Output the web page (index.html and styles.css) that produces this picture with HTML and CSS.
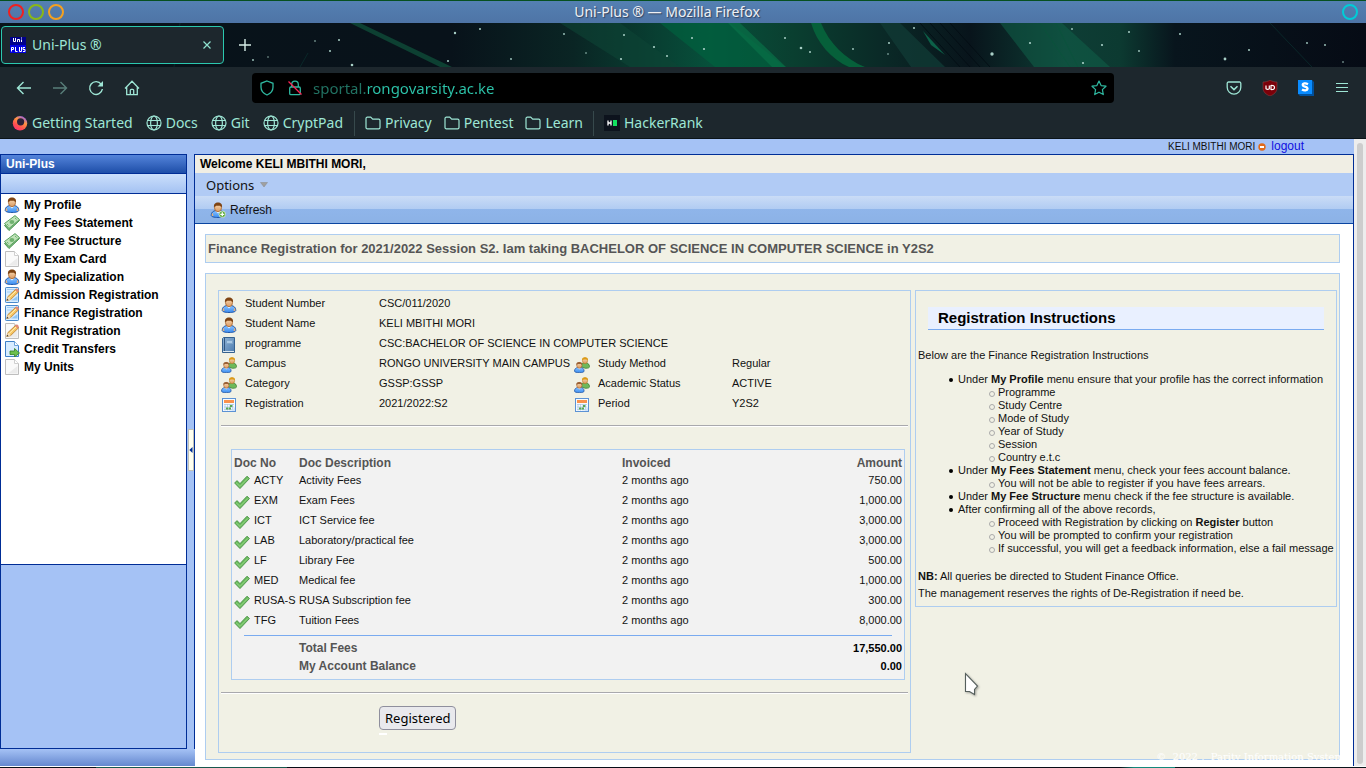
FILE: index.html
```html
<!DOCTYPE html>
<html lang="en">
<head>
<meta charset="utf-8">
<title>Uni-Plus ®</title>
<link rel="stylesheet" href="styles.css">
</head>
<body>
<svg class="sprite" aria-hidden="true">
  <defs>
    <linearGradient id="gBlue" x1="0" y1="0" x2="0" y2="1"><stop offset="0" stop-color="#8cc4ff"/><stop offset="1" stop-color="#3a8cf0"/></linearGradient>
    <linearGradient id="gHead" x1="0" y1="0" x2="0" y2="1"><stop offset="0" stop-color="#fbd9b0"/><stop offset="1" stop-color="#d99a63"/></linearGradient>
    <linearGradient id="gBook" x1="0" y1="0" x2="1" y2="1"><stop offset="0" stop-color="#8fb4d8"/><stop offset="1" stop-color="#4d7cae"/></linearGradient>
    <linearGradient id="gFire" x1="0.8" y1="0" x2="0.2" y2="1"><stop offset="0" stop-color="#9059ff"/><stop offset=".35" stop-color="#ff9640"/><stop offset=".7" stop-color="#ff5050"/><stop offset="1" stop-color="#ff2f7a"/></linearGradient>
    <linearGradient id="gWall" x1="0" y1="0" x2="1" y2="0">
      <stop offset="0" stop-color="#08131a"/><stop offset=".33" stop-color="#08121a"/><stop offset=".42" stop-color="#0a2524"/><stop offset=".52" stop-color="#07503b"/><stop offset=".58" stop-color="#0a3f30"/><stop offset=".65" stop-color="#0a2826"/><stop offset=".71" stop-color="#08141b"/><stop offset=".78" stop-color="#0e3d35"/><stop offset=".82" stop-color="#0c3a31"/><stop offset=".86" stop-color="#08151d"/><stop offset="1" stop-color="#060b15"/>
    </linearGradient>
  </defs>
  <symbol id="user" viewBox="0 0 16 16">
    <path d="M1.200 13.200C1.200 10.400 3.200 9 5.500 8.600h5c2.300.4 4.300 1.800 4.300 4.600 0 1.500-2.800 2.300-6.800 2.300s-6.800-.8-6.800-2.300z" fill="url(#gBlue)" stroke="#2459a8"/>
    <path d="M5.500 8.800h5L8 11.500z" fill="#e8f4ff"/>
    <path d="M1.600 13.200c0-.9.300-1.700.8-2.400l1.100 3.200c-1-.2-1.900-.4-1.900-.8zM14.400 13.200c0-.9-.3-1.700-.8-2.400L12.500 14c1-.2 1.900-.4 1.900-.8z" fill="#f2b375"/>
    <ellipse cx="8" cy="5.700" rx="3.500" ry="4" fill="url(#gHead)" stroke="#a7642e" stroke-width=".8"/>
    <path d="M4 5.500C3.500 2 5.300.6 8 .6S12.500 2 12 5.500C11 4 10 3.500 8 3.700 6 3.500 5 4 4 5.500z" fill="#7f4413"/>
  </symbol>
  <symbol id="group" viewBox="0 0 16 16">
    <path d="M6.500 9.500c0-2 1.500-3.200 3-3.400h3c1.700.2 3 1.500 3 3.500 0 1.300-1.500 1.700-4.200 1.700z" fill="#6fb85a" stroke="#3a8034" stroke-width=".8"/>
    <ellipse cx="11" cy="3.700" rx="2.600" ry="2.900" fill="url(#gHead)" stroke="#b97d24" stroke-width=".6"/>
    <path d="M8 3.600C7.800 1.200 9 .3 11 .3s3.300.9 3 3.300C13 2.400 12.400 2.400 11 2.500 9.500 2.400 9 2.600 8 3.600z" fill="#dd9b16"/>
    <path d="M.5 14c0-2 1.400-3.200 3-3.500h3.600c1.700.3 3 1.500 3 3.500 0 1.200-1.700 1.600-4.800 1.600S.5 15.200.5 14z" fill="url(#gBlue)" stroke="#2459a8" stroke-width=".8"/>
    <path d="M3.700 10.600h3.200l-1.600 1.800z" fill="#eef7ff"/>
    <ellipse cx="5.300" cy="8.300" rx="2.600" ry="2.900" fill="url(#gHead)" stroke="#a7642e" stroke-width=".6"/>
    <path d="M2.300 8.200C2 5.800 3.300 4.900 5.300 4.900s3.300.9 3 3.300C7.300 7 6.700 7 5.300 7.100 3.900 7 3.300 7.200 2.300 8.200z" fill="#9a6034"/>
  </symbol>
  <symbol id="money" viewBox="0 0 16 16">
    <path d="M.5 10.500L11 1l4.500 4.500L5 15.500z" fill="#7cbc7c" stroke="#4d9552"/>
    <path d="M.5 8.500L11 .6l4.500 3.900L5 13.500z" fill="#bfe2b8" stroke="#5ca261"/>
    <ellipse cx="7.900" cy="7" rx="2.400" ry="2.100" fill="#6fb16e"/>
    <path d="M3 9l1.500 1.500M11 3l1.600 1.500" stroke="#6fb16e"/>
  </symbol>
  <symbol id="page" viewBox="0 0 16 16">
    <path d="M1.500.5h9l4 4v11h-13z" fill="#fafafa" stroke="#bebebe"/><path d="M10.500.5v4h4" fill="#fff" stroke="#cfcfcf"/><path d="M4 14.500h9.500V7z" fill="#ebebeb"/>
  </symbol>
  <symbol id="pencil" viewBox="0 0 16 16">
    <path d="M4 9.500L12 2l2.700 2.700-8 7.800-4 1.100z" fill="#f7c765" stroke="#b57724" stroke-width=".8"/><path d="M5.200 10.500L12.800 3.300" stroke="#fff0b8"/><path d="M4 9.500l2.700 3-4 1.100z" fill="#f5dfbd"/><path d="M3.300 11.800l1.200 1.300-1.800.5z" fill="#333"/><path d="M11 3l1-1.200c1.500-.8 3.200.9 2.700 2.700l-1 1z" fill="#e28b78"/>
  </symbol>
  <symbol id="sheetedit" viewBox="0 0 16 16">
    <rect x="1.500" y=".5" width="13" height="15" rx=".7" fill="#d9edff" stroke="#4a89cb"/><path d="M3 2.500h8M3 5h5" stroke="#a2cdf4"/><path d="M7 13.500h6.500V9" fill="#93c8f5"/><use href="#pencil"/>
  </symbol>
  <symbol id="pageedit" viewBox="0 0 16 16"><use href="#page"/><use href="#pencil"/></symbol>
  <symbol id="pagego" viewBox="0 0 16 16">
    <path d="M1.500.5h9l4 4v11h-13z" fill="#d8ecff" stroke="#3f80c8"/><path d="M10.500.5v4h4" fill="#fff" stroke="#6aa2dc"/>
    <path d="M6 10h4.500V7.500L15.500 12l-5 4v-2.500H6z" fill="#6cc04e" stroke="#347f29" stroke-width=".8"/>
  </symbol>
  <symbol id="book" viewBox="0 0 16 16">
    <path d="M1.500 1.500l1-1h11v15h-12z" fill="url(#gBook)" stroke="#35618f"/><path d="M3.500 1v14" stroke="#31567e"/><rect x="5.500" y="3.500" width="6" height="3" fill="#a9c9e5" stroke="#7fa6ca"/><path d="M2 14.500h11" stroke="#dbe8f3"/>
  </symbol>
  <symbol id="cal" viewBox="0 0 16 16">
    <rect x="1.500" y="1.500" width="13" height="13" fill="#f5faff" stroke="#5c92d4"/><path d="M3 3h10v3H3z" fill="#f9914c"/><path d="M3 7.500h10M3 10h10M3 12.500h10M4 7v6.500M6.500 7v6.500M9 7v6.500M11.500 7v6.500" stroke="#a9c3df" stroke-width=".7"/><path d="M9 8h2.300v2H9zM5 10.500h2.500v2H5zM8 10.500h2v2H8z" fill="#59a852"/><path d="M10 14l4-4v4z" fill="#cfe3fa"/>
  </symbol>
  <symbol id="tick" viewBox="0 0 16 16">
    <path d="M.6 9l2.400-2.400 3 3L13 2.200l2.500 2.300L6 14.600z" fill="#6dbb60" stroke="#3e8a3c" stroke-width=".8"/><path d="M2.200 8.800l3.800 3.600L14 4.300" fill="none" stroke="#9bdc8d" stroke-width=".8"/>
  </symbol>
  <symbol id="useradd" viewBox="0 0 16 16"><use href="#user"/><circle cx="12.300" cy="12.300" r="3.300" fill="#5bab3a" stroke="#fff" stroke-width=".6"/><path d="M12.300 10.300v4M10.300 12.300h4" stroke="#fff" stroke-width="1.300"/></symbol>
  <symbol id="globe" viewBox="0 0 16 16"><g fill="none" stroke="currentColor" stroke-width="1.200"><circle cx="8" cy="8" r="7"/><ellipse cx="8" cy="8" rx="3.400" ry="7"/><path d="M1.500 5.500h13M1.500 10.500h13"/></g></symbol>
  <symbol id="folder" viewBox="0 0 16 16"><path d="M1 3.500a1.300 1.300 0 0 1 1.300-1.300h3.400l2 2h6a1.300 1.300 0 0 1 1.300 1.300v7a1.300 1.300 0 0 1-1.300 1.300H2.300A1.300 1.300 0 0 1 1 12.500z" fill="none" stroke="currentColor" stroke-width="1.200"/></symbol>
</svg>

<header class="browser">
  <div class="titlebar">
    <button class="ring red" aria-label="Close window"></button>
    <button class="ring green" aria-label="Minimize window"></button>
    <button class="ring orange" aria-label="Maximize window"></button>
    <span class="window-title">Uni-Plus ® — Mozilla Firefox</span>
    <button class="ring cyan" aria-label="Pin window"></button>
  </div>
  <div class="tabstrip">
    <svg class="wallpaper" viewBox="0 0 1366 44" preserveAspectRatio="none" aria-hidden="true">
      <rect width="1366" height="44" fill="url(#gWall)"/>
      <path d="M350 0h10l92 44h-12z" fill="#0d4032"/>
      <path d="M560 0h60l60 44h-50z" fill="#0d4436" opacity=".6"/><path d="M660 0h70l55 44h-70z" fill="#00633f" opacity=".65"/><path d="M728 0h12l46 44h-14z" fill="#087047" opacity=".7"/>
      <path d="M811 0h10c8 20 24 36 44 44h-16c-18-8-32-24-38-44z" fill="#06603a"/>
      <path d="M880 0h20l45 44h-34z" fill="#103a35" opacity=".8"/><path d="M923 8l22 24-14-10z" fill="#0c6048"/>
      <path d="M1000 0h62l48 44h-76z" fill="#116048" opacity=".55"/><path d="M1040 0l30 44M1056 0l22 44" stroke="#08553a" opacity=".6"/>
      <path d="M920 0l40 44M930 0l40 44M940 0l40 44M950 0l40 44" stroke="#030c13" opacity=".8"/><path d="M1270 0l42 44M308 30l-8 14M180 0l-6 44" stroke="#0b3130" opacity=".7"/>
      <g fill="#a8cfc6">
        <circle cx="253" cy="37" r=".9"/><circle cx="268" cy="34" r=".7"/><circle cx="315" cy="18" r=".8"/><circle cx="330" cy="28" r="1"/><circle cx="339" cy="17" r="1"/><circle cx="352" cy="42" r="1.300"/><circle cx="448" cy="38" r="1"/><circle cx="455" cy="10" r="1.200"/><circle cx="480" cy="6" r="1"/><circle cx="511" cy="36" r=".9"/><circle cx="564" cy="11" r=".9"/><circle cx="586" cy="30" r=".8"/><circle cx="624" cy="12" r="1"/><circle cx="621" cy="36" r="1.100"/><circle cx="654" cy="24" r="1.100"/><circle cx="667" cy="33" r="1"/><circle cx="692" cy="15" r="1"/><circle cx="704" cy="26" r="1.100"/><circle cx="785" cy="15" r="1"/><circle cx="801" cy="25" r="1.300"/><circle cx="810" cy="29" r="1"/><circle cx="853" cy="26" r=".9"/><circle cx="889" cy="20" r="1"/><circle cx="888" cy="31" r=".8"/><circle cx="914" cy="5" r="1"/><circle cx="992" cy="31" r="1.700"/><circle cx="1030" cy="20" r="1.100"/><circle cx="1072" cy="6" r=".9"/><circle cx="1083" cy="40" r="1.100"/><circle cx="1102" cy="22" r="1.100"/><circle cx="1129" cy="9" r="1"/><circle cx="1139" cy="28" r=".9"/><circle cx="1180" cy="11" r="1"/><circle cx="1225" cy="36" r="1.400"/><circle cx="1249" cy="27" r="1"/><circle cx="1307" cy="20" r=".9"/><circle cx="1325" cy="22" r=".9"/><circle cx="1343" cy="39" r=".8"/>
      </g>
    </svg>
    <div class="tab">
      <svg class="favicon" viewBox="0 0 16 16" aria-hidden="true"><rect width="16" height="16" fill="#0000e0"/><rect width="16" height="8" fill="#00008b"/><path d="M3.500 1v3.500h2V1M7.500 5V2.500h2V5M11.500 2.500V5M11.500.5v1M1.500 14.500v-4h2v2h-2M5.500 10v4.500h2M9.500 10v4.500h2V10M15 10.500h-2v2h2v2h-2" fill="none" stroke="#fff"/></svg>
      <span class="tab-title">Uni-Plus ®</span>
      <button class="plain close" aria-label="Close tab"><svg viewBox="0 0 10 10"><path d="M1.500 1.500l7 7M8.500 1.500l-7 7" stroke="#8fe3cf" stroke-width="1.200"/></svg></button>
    </div>
    <button class="plain newtab" aria-label="New tab"><svg viewBox="0 0 14 14"><path d="M7 1v12M1 7h12" stroke="#d7eee8" stroke-width="1.400"/></svg></button>
  </div>
  <nav class="navbar" aria-label="Browser">
    <button class="plain tool" aria-label="Back"><svg viewBox="0 0 16 16"><path d="M15 8H1.500M7.500 2l-6 6 6 6" fill="none" stroke="currentColor" stroke-width="1.400"/></svg></button>
    <button class="plain tool faded" aria-label="Forward"><svg viewBox="0 0 16 16"><path d="M1 8h13.500M8.500 2l6 6-6 6" fill="none" stroke="currentColor" stroke-width="1.400"/></svg></button>
    <button class="plain tool" aria-label="Reload"><svg viewBox="0 0 16 16"><path d="M13.300 4.300A6.400 6.400 0 1 0 14.400 9" fill="none" stroke="currentColor" stroke-width="1.400"/><path d="M15 1v5.500H9.500z" fill="currentColor"/></svg></button>
    <button class="plain tool" aria-label="Home"><svg viewBox="0 0 16 16"><path d="M1 8.500L8 1.300l7 7.200M2.700 7v7.700h10.600V7M6.300 14.500V10.300a1 1 0 0 1 1-1h1.400a1 1 0 0 1 1 1v4.200" fill="none" stroke="currentColor" stroke-width="1.300"/></svg></button>
    <div class="urlbar">
      <svg viewBox="0 0 16 16" aria-hidden="true"><path d="M8 1l6 2.300v4C14 11 11.500 13.500 8 15 4.500 13.500 2 11 2 7.300v-4z" fill="none" stroke="currentColor" stroke-width="1.300"/></svg>
      <svg viewBox="0 0 16 16" aria-hidden="true"><rect x="2.700" y="7" width="10.600" height="7.700" rx="1.300" fill="none" stroke="currentColor" stroke-width="1.300"/><path d="M4.700 7V4.500a3.300 3.300 0 0 1 6.600 0V7" fill="none" stroke="currentColor" stroke-width="1.300"/><path d="M1.500 1.500l13 13" stroke="#ff2255" stroke-width="1.300"/></svg>
      <input class="url" type="text" aria-label="Address" value="sportal.rongovarsity.ac.ke">
      <svg viewBox="0 0 16 16" aria-hidden="true"><path d="M8 1l2.100 4.600 4.900.6-3.600 3.400.9 5L8 12.200 3.700 14.600l.9-5L1 6.200l4.900-.6z" fill="none" stroke="currentColor" stroke-width="1.200" stroke-linejoin="round"/></svg>
    </div>
    <div class="extensions">
      <button class="plain tool" aria-label="Pocket"><svg viewBox="0 0 16 16"><path d="M2.500 2h11A1.300 1.300 0 0 1 14.800 3.300v4a6.800 6.800 0 0 1-13.600 0v-4A1.300 1.300 0 0 1 2.500 2z" fill="none" stroke="currentColor" stroke-width="1.300"/><path d="M4.500 6.300L8 9.600l3.500-3.300" fill="none" stroke="currentColor" stroke-width="1.500"/></svg></button>
      <button class="plain tool" aria-label="Ad blocker"><svg viewBox="0 0 16 16"><path d="M8 0c2 1.500 4.500 2 7 2v6c0 4-3 6.500-7 8-4-1.500-7-4-7-8V2c2.500 0 5-.5 7-2z" fill="#7b0009" stroke="#8c4a4a" stroke-width=".5"/><path d="M4 5.500v3.300q1.700 1.300 3.300 0V5.500M9 5.500v4q3.500.3 3.500-2t-3.500-2z" fill="none" stroke="#fff" stroke-width="1.200"/></svg></button>
      <button class="plain tool" aria-label="Stylus"><svg viewBox="0 0 16 16"><path d="M14 0l2 2v14H2l-2-2z" fill="#00509c"/><path d="M0 0h14v14H0z" fill="#0a8cff"/><path d="M10 4.200C7.500 2.800 4.500 3.300 4.800 5.200 5 7 9.500 6.400 9.500 8.800 9.300 10.800 6 10.700 4 9.500" fill="none" stroke="#fff" stroke-width="2.300"/></svg></button>
      <button class="plain tool" aria-label="Menu"><svg viewBox="0 0 16 16"><path d="M2 3.500h12M2 7.500h12M2 11.500h12" stroke="currentColor"/></svg></button>
    </div>
  </nav>
  <nav class="bookmarks" aria-label="Bookmarks">
    <a href="#"><svg viewBox="0 0 16 16" aria-hidden="true"><circle cx="8" cy="8.300" r="7.200" fill="url(#gFire)"/><circle cx="8.600" cy="6.800" r="3.600" fill="#2b2138"/></svg>Getting Started</a>
    <a href="#"><svg aria-hidden="true"><use href="#globe"/></svg>Docs</a>
    <a href="#"><svg aria-hidden="true"><use href="#globe"/></svg>Git</a>
    <a href="#"><svg aria-hidden="true"><use href="#globe"/></svg>CryptPad</a>
    <span class="divider"></span>
    <a href="#"><svg aria-hidden="true"><use href="#folder"/></svg>Privacy</a>
    <a href="#"><svg aria-hidden="true"><use href="#folder"/></svg>Pentest</a>
    <a href="#"><svg aria-hidden="true"><use href="#folder"/></svg>Learn</a>
    <span class="divider"></span>
    <a href="#"><svg viewBox="0 0 16 16" aria-hidden="true"><rect width="16" height="16" fill="#0d131d"/><path d="M4 5.500v5M7 5.500v5M4 8h3" stroke="#fff" stroke-width="1.300"/><rect x="9" y="5" width="4" height="6" fill="#11e05f"/></svg>HackerRank</a>
  </nav>
</header>

<div class="viewport">
  <div class="site">
    <div class="userbar"><span>KELI MBITHI MORI</span><svg viewBox="0 0 8 8" aria-hidden="true"><circle cx="4" cy="4" r="3.700" fill="#e06a1c"/><rect x="2" y="3" width="4" height="2" fill="#fff"/></svg><a href="#">logout</a></div>
    <div class="columns">
      <div class="west">
        <div class="west-top">
          <aside class="sidebar">
            <h2>Uni-Plus</h2>
            <div class="side-tools"></div>
            <nav class="side-menu" aria-label="Uni-Plus">
              <a href="#"><svg><use href="#user"/></svg>My Profile</a>
              <a href="#"><svg><use href="#money"/></svg>My Fees Statement</a>
              <a href="#"><svg><use href="#money"/></svg>My Fee Structure</a>
              <a href="#"><svg><use href="#page"/></svg>My Exam Card</a>
              <a href="#"><svg><use href="#user"/></svg>My Specialization</a>
              <a href="#"><svg><use href="#sheetedit"/></svg>Admission Registration</a>
              <a href="#"><svg><use href="#sheetedit"/></svg>Finance Registration</a>
              <a href="#"><svg><use href="#pageedit"/></svg>Unit Registration</a>
              <a href="#"><svg><use href="#pagego"/></svg>Credit Transfers</a>
              <a href="#"><svg><use href="#page"/></svg>My Units</a>
            </nav>
            <div class="side-rest"></div>
          </aside>
          <div class="splitter"><button class="plain" aria-label="Collapse sidebar"><svg viewBox="0 0 4 6"><path d="M3.500 0v6L.3 3z" fill="#002d96"/></svg></button></div>
        </div>
        <div class="west-foot"></div>
      </div>
      <main class="main">
        <h1>Welcome KELI MBITHI MORI,</h1>
        <div class="menu"><button class="plain">Options<svg viewBox="0 0 8 6" aria-hidden="true"><path d="M.5.5h7L4 5z" fill="#a0a0a0" stroke="#888" stroke-width=".5"/></svg></button></div>
        <div class="toolbar"><button class="plain"><svg aria-hidden="true"><use href="#useradd"/></svg>Refresh</button></div>
        <div class="content">
          <h2 class="caption">Finance Registration for 2021/2022 Session S2. Iam taking BACHELOR OF SCIENCE IN COMPUTER SCIENCE in Y2S2</h2>
          <div class="panel">
            <section class="record">
              <table class="details">
                <colgroup><col class="c-icon"><col class="c-label"><col class="c-value"><col class="c-icon"><col class="c-label"><col></colgroup>
                <tr><td><svg><use href="#user"/></svg></td><th>Student Number</th><td colspan="4">CSC/011/2020</td></tr>
                <tr><td><svg><use href="#user"/></svg></td><th>Student Name</th><td colspan="4">KELI MBITHI MORI</td></tr>
                <tr><td><svg><use href="#book"/></svg></td><th>programme</th><td colspan="4">CSC:BACHELOR OF SCIENCE IN COMPUTER SCIENCE</td></tr>
                <tr><td><svg><use href="#group"/></svg></td><th>Campus</th><td>RONGO UNIVERSITY MAIN CAMPUS</td><td><svg><use href="#group"/></svg></td><th>Study Method</th><td>Regular</td></tr>
                <tr><td><svg><use href="#group"/></svg></td><th>Category</th><td>GSSP:GSSP</td><td><svg><use href="#group"/></svg></td><th>Academic Status</th><td>ACTIVE</td></tr>
                <tr><td><svg><use href="#cal"/></svg></td><th>Registration</th><td>2021/2022:S2</td><td><svg><use href="#cal"/></svg></td><th>Period</th><td>Y2S2</td></tr>
              </table>
              <hr>
              <div class="fees">
                <table>
                  <colgroup><col class="f-code"><col class="f-desc"><col class="f-when"><col></colgroup>
                  <thead><tr><th>Doc No</th><th>Doc Description</th><th>Invoiced</th><th>Amount</th></tr></thead>
                  <tbody>
                    <tr><td><svg><use href="#tick"/></svg>ACTY</td><td>Activity Fees</td><td>2 months ago</td><td>750.00</td></tr>
                    <tr><td><svg><use href="#tick"/></svg>EXM</td><td>Exam Fees</td><td>2 months ago</td><td>1,000.00</td></tr>
                    <tr><td><svg><use href="#tick"/></svg>ICT</td><td>ICT Service fee</td><td>2 months ago</td><td>3,000.00</td></tr>
                    <tr><td><svg><use href="#tick"/></svg>LAB</td><td>Laboratory/practical fee</td><td>2 months ago</td><td>3,000.00</td></tr>
                    <tr><td><svg><use href="#tick"/></svg>LF</td><td>Library Fee</td><td>2 months ago</td><td>500.00</td></tr>
                    <tr><td><svg><use href="#tick"/></svg>MED</td><td>Medical fee</td><td>2 months ago</td><td>1,000.00</td></tr>
                    <tr><td><svg><use href="#tick"/></svg>RUSA-S</td><td>RUSA Subscription fee</td><td>2 months ago</td><td>300.00</td></tr>
                    <tr><td><svg><use href="#tick"/></svg>TFG</td><td>Tuition Fees</td><td>2 months ago</td><td>8,000.00</td></tr>
                  </tbody>
                  <tfoot>
                    <tr class="rule"><td colspan="4"><div></div></td></tr>
                    <tr><td></td><th>Total Fees</th><td></td><td>17,550.00</td></tr>
                    <tr><td></td><th>My Account Balance</th><td></td><td>0.00</td></tr>
                  </tfoot>
                </table>
              </div>
              <hr>
              <div class="actions"><button class="registered">Registered</button><span class="dash"></span></div>
            </section>
            <section class="guide">
              <h3>Registration Instructions</h3>
              <p>Below are the Finance Registration Instructions</p>
              <ul>
                <li>Under <b>My Profile</b> menu ensure that your profile has the correct information
                  <ul><li>Programme</li><li>Study Centre</li><li>Mode of Study</li><li>Year of Study</li><li>Session</li><li>Country e.t.c</li></ul></li>
                <li>Under <b>My Fees Statement</b> menu, check your fees account balance.
                  <ul><li>You will not be able to register if you have fees arrears.</li></ul></li>
                <li>Under <b>My Fee Structure</b> menu check if the fee structure is available.</li>
                <li>After confirming all of the above records,
                  <ul><li>Proceed with Registration by clicking on <b>Register</b> button</li><li>You will be prompted to confirm your registration</li><li>If successful, you will get a feedback information, else a fail message</li></ul></li>
              </ul>
              <p class="note"><b>NB:</b> All queries be directed to Student Finance Office.<br>The management reserves the rights of De-Registration if need be.</p>
            </section>
          </div>
        </div>
      </main>
    </div>
    <div class="copyright">©&nbsp; 2022 ,&nbsp; Parity Information System</div>
  </div>
  <div class="scrollbar"><div class="thumb"></div></div>
  <svg class="pointer" viewBox="0 0 16 24" aria-hidden="true"><path d="M1.500 1.500v18h4l5 3v-5l3-3.500z" fill="#fff" stroke="#555f5c" stroke-width="1.100"/></svg>
</div>
<div class="desktop-edge"></div>
</body>
</html>
```
FILE: styles.css
```css
* { box-sizing: border-box; }
body {
  margin: 0;
  height: 100vh;
  display: flex;
  flex-direction: column;
  overflow: hidden;
  font: 11px/20px "Liberation Sans", Arial, sans-serif;
  color: #111;
}
.sprite { position: absolute; width: 0; height: 0; }
svg { width: 16px; height: 16px; display: block; flex: none; }
h1, h2, h3, p, ul { margin: 0; }
.plain { border: 0; padding: 0; background: none; color: inherit; font: inherit; }

/* Browser frame */
.browser {
  flex: none;
  background: #1d272d;
  border-top: 1px solid #06501f;
  border-bottom: 1px solid #0b1419;
  color: #9ee6d5;
  font: 14px/20px "Noto Sans", sans-serif;
}
.titlebar {
  height: 22px;
  display: flex;
  align-items: center;
  gap: 4px;
  padding: 0 8px;
  background: linear-gradient(#5480b2, #4e74a6);
}
.window-title {
  flex: 1;
  text-align: center;
  padding-right: 72px;
  color: #eef0f4;
  text-shadow: 1px 1px 1px #33425c;
}
.ring { width: 16px; height: 16px; padding: 0; border: 2px solid; border-radius: 50%; background: none; }
.red { color: #f02020; }
.green { color: #8ab816; }
.orange { color: #f5a11f; }
.cyan { color: #00ccd8; }
.tabstrip { position: relative; height: 44px; display: flex; align-items: center; padding: 0 1px; }
.wallpaper { position: absolute; inset: 0; width: 100%; height: 100%; }
.tab {
  position: relative;
  width: 223px;
  height: 38px;
  display: flex;
  align-items: center;
  gap: 6px;
  padding: 0 11px 0 8px;
  border: 1px solid #2bc8af;
  border-radius: 4px;
  background: #1d272d;
}
.tab-title { flex: 1; }
.close svg { width: 10px; height: 10px; }
.newtab { position: relative; margin-left: 14px; }
.newtab svg { width: 14px; height: 14px; }
.navbar { height: 41px; display: flex; align-items: center; padding: 0 16px; }
.tool { width: 16px; margin-right: 20px; }
.faded { opacity: .45; }
.urlbar {
  flex: 1;
  height: 30px;
  margin: 0 112px 0 92px;
  padding: 0 7px;
  display: flex;
  align-items: center;
  gap: 12px;
  border-radius: 4px;
  background: #000;
  color: #2fb8a0;
}
.url {
  flex: 1;
  min-width: 0;
  height: 24px;
  padding: 0;
  border: 0;
  font: inherit;
  font-size: 15px;
  outline: 0;
  margin-left: -2px;
  background: linear-gradient(90deg, #217363 55px, #2cc4aa 55px);
  background-clip: text;
  -webkit-background-clip: text;
  color: transparent;
}
.extensions { display: flex; gap: 20px; }
.extensions .tool { margin: 0; }
.bookmarks { height: 30px; display: flex; align-items: center; padding: 0 12px; }
.bookmarks a { display: flex; align-items: center; gap: 4px; margin-right: 13px; color: inherit; text-decoration: none; }
.bookmarks .divider ~ a { margin-right: 12px; }
.divider { width: 1px; height: 25px; margin: 0 10px 0 -2px; background: #37494c; }

/* Page area */
.viewport { position: relative; flex: 1; min-height: 0; display: flex; }
.site { position: relative; flex: 1; min-width: 0; display: flex; flex-direction: column; overflow: hidden; background: #a5c2f5; }
.userbar {
  flex: none;
  display: flex;
  justify-content: flex-end;
  align-items: center;
  height: 15px;
  padding-right: 50px;
  font-size: 10px;
}
.userbar svg { width: 8px; height: 8px; margin: 0 5px 0 3px; }
.userbar a { color: #1010e0; font-size: 12px; line-height: 15px; padding-bottom: 1px; text-decoration: none; }
.columns { flex: 1; min-height: 0; display: flex; }
.west { flex: 0 0 195px; display: flex; flex-direction: column; }
.west-top { flex: 1; min-height: 0; display: flex; }
.west-foot { height: 17px; background: linear-gradient(#a5c2f5, #6588cf); }
.sidebar { flex: 1; display: flex; flex-direction: column; border: 1px solid #002d96; }
.sidebar h2 {
  padding: 0 5px;
  font-size: 12px;
  line-height: 18px;
  color: #fff;
  background: linear-gradient(#5484da, #1e4ea8);
}
.side-tools { height: 21px; border: solid #002d96; border-width: 1px 0; background: linear-gradient(#cbdffc, #a4c2f2); }
.side-menu { flex: 369 1 0; padding: 2px 3px; background: #fff; border-bottom: 1px solid #002d96; }
.side-menu a {
  display: flex;
  align-items: center;
  gap: 4px;
  height: 18px;
  font-size: 12px;
  font-weight: bold;
  color: #000;
  text-decoration: none;
}
.side-rest { flex: 184 1 0; }
.splitter { width: 8px; display: flex; align-items: center; padding-bottom: 4px; border-right: 1px solid #002d96; }
.splitter button { width: 6px; height: 42px; margin: 0 auto; border: 1px solid #c2c2b8; background: #fffff0; }
.splitter svg { width: 4px; height: 6px; }

.main { flex: 1; min-width: 0; display: flex; flex-direction: column; border: solid #002d96; border-width: 1px 1px 0 0; background: #fff; }
.main h1 { padding-left: 5px; font-size: 12px; line-height: 18px; color: #000; background: #f0eee4; }
.menu { height: 23px; display: flex; align-items: center; padding: 0 11px; background: #b1cbf5; font: 13px/20px "Noto Sans", sans-serif; }
.menu button { display: flex; align-items: center; gap: 6px; }
.menu svg { width: 8px; height: 6px; }
.toolbar {
  height: 28px;
  display: flex;
  align-items: center;
  padding: 0 15px;
  border-bottom: 1px solid #0a45a0;
  background: linear-gradient(#cadcf6, #b0cbf2 50%, #8fb5ea 50%, #8cb2e6);
  font-size: 12px;
}
.toolbar button { display: flex; align-items: center; gap: 4px; }
.content { flex: 1; min-height: 0; display: flex; flex-direction: column; padding: 10px 13px 6px 10px; }
.caption {
  padding: 4px 2px 3px;
  margin-bottom: 10px;
  border: 1px solid #aecdf0;
  background: #f1f1e5;
  font-size: 13px;
  color: #555;
}
.panel {
  flex: 1;
  display: flex;
  align-items: flex-start;
  gap: 4px;
  padding: 16px 2px 6px 12px;
  border: 1px solid #aecdf0;
  background: #f1f1e5;
}
.record { flex: 1; align-self: stretch; padding: 2px; border: 1px solid #aecdf0; }
table { width: 100%; border-collapse: collapse; table-layout: fixed; }
td, th { padding: 0; text-align: left; white-space: nowrap; vertical-align: middle; }
.details th { font-weight: normal; }
.details tr { height: 20px; }
.details td svg { margin-top: 3px; }
.c-icon { width: 24px; }
.c-label { width: 134px; }
.c-value { width: 195px; }
hr { margin: 12px 0 0; border: 0; border-top: 1px solid #a9a9ad; border-bottom: 1px solid #fff; }
.fees { margin: 22px 3px 0 10px; padding: 5px 2px 4px; border: 1px solid #aecdf0; background: #f2f2f2; }
.fees th { font-size: 12px; line-height: 16px; color: #555; }
.fees td:last-child, .fees th:last-child { text-align: right; }
.fees tbody td { height: 20px; line-height: 18px; padding-bottom: 2px; }
.fees tbody td:first-child { display: flex; gap: 4px; }
.fees tbody svg { margin-top: 3px; }
.fees tfoot td { font-weight: bold; color: #000; line-height: 18px; }
.fees tfoot th { line-height: 18px; }
.rule div { height: 1px; margin: 4px 10px 3px; background: #7aabf0; }
.f-code { width: 65px; }
.f-desc { width: 323px; }
.f-when { width: 150px; }
.actions { padding: 12px 0 0 158px; }
.registered {
  display: block;
  height: 24px;
  padding: 0 5px;
  border: 1px solid #8f8f9d;
  border-radius: 4px;
  background: #e9e9ed;
  color: #000;
  font: 13px/20px "Noto Sans", sans-serif;
}
.dash { display: block; width: 8px; height: 2px; margin-top: 3px; background: #fff; }
.guide { flex: 0 0 422px; padding: 16px 2px 4px; border: 1px solid #aecdf0; line-height: 13px; }
.guide h3 {
  margin: 0 10px 19px;
  padding-left: 10px;
  border-bottom: 1px solid #7aabf0;
  background: #e9f0ff;
  color: #000;
  font-size: 15px;
  line-height: 22px;
}
.guide ul { list-style: none; padding-left: 40px; }
.guide > ul { margin: 11px 0 13px; }
.guide ul ul { white-space: nowrap; }
.guide li { position: relative; }
.guide li::before {
  content: "";
  position: absolute;
  left: -9px;
  top: 5px;
  width: 4px;
  height: 4px;
  border-radius: 50%;
  background: #000;
}
.guide li li::before { background: none; border: 1px solid #aaa; }
.guide .note { line-height: 17px; }
.copyright {
  position: absolute;
  right: 10px;
  bottom: 1px;
  white-space: nowrap;
  color: #fff;
  font: 10px/17px "DejaVu Serif", serif;
}
.scrollbar { width: 12px; padding: 4px 4px 2px 3px; background: #ededed; }
.thumb { width: 6px; height: 100%; border-radius: 3px; background: #cdcdcd; }
.pointer { position: absolute; left: 964px; top: 533px; width: 16px; height: 24px; filter: drop-shadow(1px 1px 1px #0005); }
.desktop-edge { flex: none; height: 2px; border-top: 1px solid #fff; background: linear-gradient(90deg, #0a1018 7%, #17584e 7% 21%, #070d16 21% 82%, #12897c 83% 86%, #0a151b 86%); }
```
